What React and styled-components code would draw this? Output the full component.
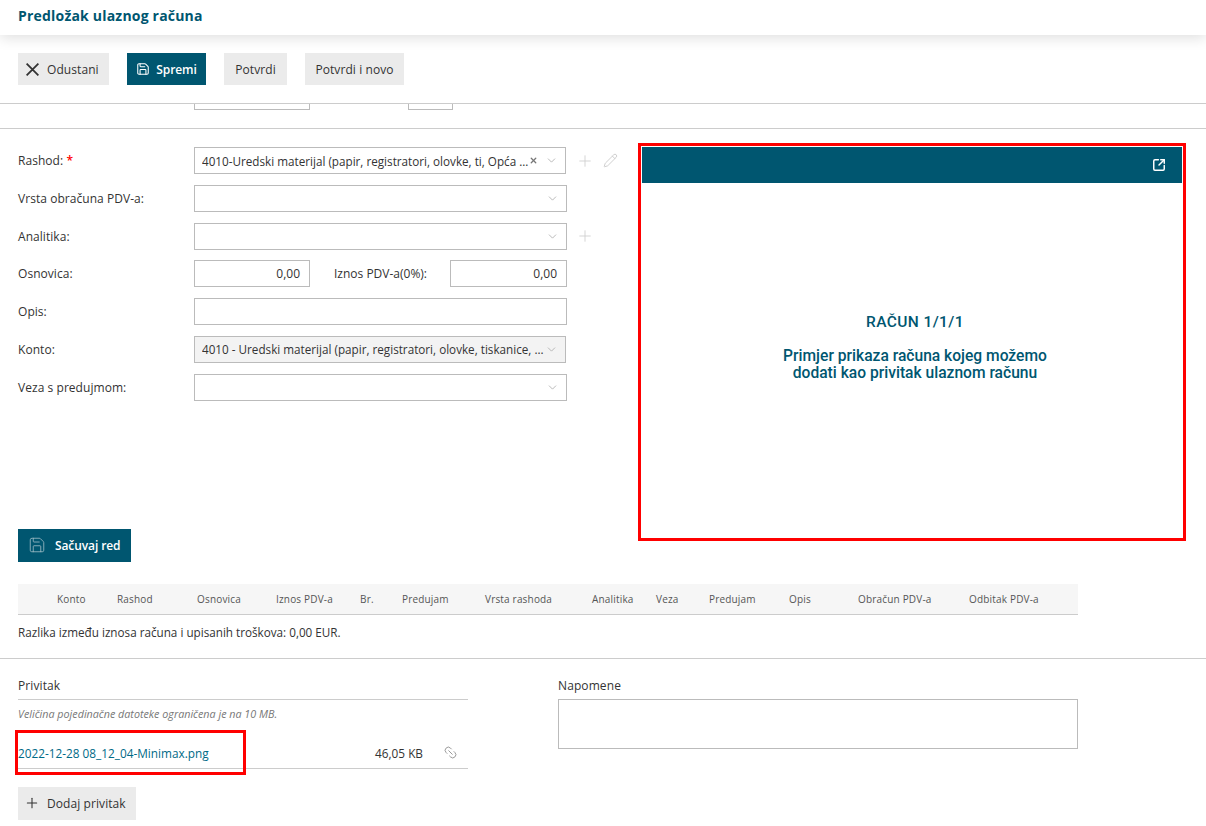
import React from "react";
import styled, { createGlobalStyle } from "styled-components";
import { X, Save, Plus, Pencil, ChevronDown, SquareArrowOutUpRight, Link2 } from "lucide-react";

const Global = createGlobalStyle`
  html, body {
    margin: 0;
    padding: 0;
    background: #fff;
    overflow: hidden;
  }
  body {
    font-family: "Open Sans", "Liberation Sans", sans-serif;
    font-size: 12px;
    color: #333;
  }
  * {
    box-sizing: border-box;
  }
`;

const Page = styled.div`
  width: 1206px;
  height: 826px;
  overflow: hidden;
`;

const Header = styled.header`
  position: relative;
  height: 35px;
  padding: 6px 18px 0;
  background: #fff;
  box-shadow: 0 3px 14px rgba(0, 0, 0, 0.13);
`;

const Title = styled.h1`
  margin: 0;
  font-size: 14px;
  line-height: 19px;
  font-weight: 700;
  letter-spacing: 0.2px;
  color: #005670;
`;

const Toolbar = styled.div`
  display: flex;
  gap: 18px;
  height: 69px;
  padding: 18px 18px 0;
  border-bottom: 1px solid #ccc;
`;

const Button = styled.button`
  display: flex;
  align-items: center;
  justify-content: ${(p) => (p.$left ? "flex-start" : "center")};
  gap: ${(p) => p.$gap || 6}px;
  width: ${(p) => p.$w}px;
  height: ${(p) => p.$h || 32}px;
  padding: 0 0 0 ${(p) => p.$left || 0}px;
  border: 0;
  font-family: inherit;
  font-size: 12px;
  font-weight: ${(p) => (p.$primary ? 600 : 400)};
  letter-spacing: ${(p) => (p.$primary ? -0.1 : 0.08)}px;
  color: ${(p) => (p.$primary ? "#fff" : "#333")};
  background: ${(p) => (p.$primary ? "#005670" : "#ebebeb")};
`;

const CloseIcon = styled.svg`
  flex: none;
  fill: none;
  stroke: #333;
  stroke-width: 1.8;
`;

const ClippedStrip = styled.div`
  display: flex;
  gap: 98px;
  height: 25px;
  padding-left: 194px;
  border-bottom: 1px solid #ccc;
`;

const ClippedInput = styled.div`
  width: ${(p) => p.$w}px;
  height: 6px;
  border: 1px solid #bbb;
  border-top: 0;
`;

const FormSection = styled.section`
  display: flex;
  padding-left: 18px;
`;

const LeftColumn = styled.div`
  width: 620px;
  padding-top: 18px;
`;

const Rows = styled.div`
  display: flex;
  flex-direction: column;
  gap: 10.75px;
`;

const Row = styled.div`
  display: flex;
  align-items: center;
  height: 27px;
`;

const Label = styled.label`
  flex: none;
  width: 176px;
  letter-spacing: 0.05px;
`;

const Required = styled.span`
  font-weight: 600;
  color: #f00;
`;

const Select = styled.div`
  display: flex;
  align-items: center;
  flex: none;
  width: ${(p) => p.$w || 373}px;
  height: 27px;
  padding: 0 7px;
  border: 1px solid #bbb;
  font-size: 11.7px;
  background: ${(p) => (p.$disabled ? "#f3f3f3" : "#fff")};
`;

const SelectValue = styled.span`
  flex: 1;
  min-width: 0;
  white-space: nowrap;
  overflow: hidden;
`;

const Clear = styled(X)`
  flex: none;
  margin-right: 7px;
  color: #777;
`;

const Chevron = styled(ChevronDown)`
  flex: none;
  margin-left: auto;
  color: #aaa;
`;

const Actions = styled.div`
  display: flex;
  align-items: center;
  gap: 9px;
  margin-left: ${(p) => p.$ml}px;
  color: #ccc;
`;

const NumberInput = styled.div`
  flex: none;
  width: ${(p) => p.$w}px;
  height: 27px;
  padding-right: 9px;
  border: 1px solid #bbb;
  line-height: 25px;
  text-align: right;
`;

const InlineLabel = styled.span`
  flex: none;
  width: 140px;
  padding-left: 24px;
  white-space: nowrap;
`;

const TextInput = styled.div`
  width: 373px;
  height: 27px;
  border: 1px solid #bbb;
`;

const SaveRow = styled.div`
  margin-top: 128px;
`;

const Preview = styled.aside`
  width: 548px;
  height: 398px;
  margin-top: 14px;
  padding: 1px;
  border: 3px solid #f00;
  background: #fff;
`;

const PreviewBar = styled.div`
  display: flex;
  align-items: center;
  justify-content: flex-end;
  width: 540px;
  height: 36px;
  padding-right: 16px;
  color: #fff;
  background: #005670;
`;

const PreviewBody = styled.div`
  padding: 129px 0 0 6px;
  font-family: Roboto, "Liberation Sans", sans-serif;
  text-align: center;
  color: #005670;
`;

const PreviewTitle = styled.div`
  font-size: 15.5px;
  line-height: 20px;
  font-weight: 500;
  letter-spacing: 0.4px;
`;

const PreviewText = styled.div`
  margin-top: 16px;
  font-size: 15.6px;
  line-height: 17px;
  font-weight: 500;
`;

const TableHead = styled.div`
  display: grid;
  grid-template-columns: 60px 80px 79px 84px 42px 83px 107px 64px 53px 80px 69px 111px auto;
  align-items: center;
  width: 1060px;
  height: 31px;
  margin: 22px 0 0 18px;
  padding-left: 39px;
  font-size: 10px;
  letter-spacing: 0.18px;
  color: #555;
  background: #f6f6f6;
  border-bottom: 1px solid #ccc;
`;

const Difference = styled.div`
  height: 44px;
  padding: 9px 0 0 18px;
  font-size: 11.7px;
  line-height: 17px;
  border-bottom: 1px solid #ccc;
`;

const Bottom = styled.section`
  display: flex;
  gap: 90px;
  padding: 18px 18px 0;
`;

const Attachments = styled.div`
  width: 450px;
`;

const Notes = styled.div`
  width: 520px;
`;

const SectionLabel = styled.div`
  height: 22px;
  line-height: 18px;
  color: #333;
  letter-spacing: 0.1px;
`;

const AttachmentsLabel = styled(SectionLabel)`
  height: 23px;
  border-bottom: 1px solid #ccc;
`;

const Hint = styled.div`
  margin-top: 7px;
  font-size: 10.75px;
  line-height: 14px;
  font-style: italic;
  color: #777;
`;

const FileRow = styled.div`
  position: relative;
  display: flex;
  align-items: center;
  height: 41px;
  margin-top: 7px;
  padding-top: 10px;
  font-size: 11.8px;
  border-bottom: 1px solid #ccc;
`;

const FileLink = styled.a`
  flex: 1;
  color: #006a87;
`;

const FileSize = styled.span`
  margin-right: 20px;
`;

const FileIcon = styled(Link2)`
  margin-right: 10px;
  color: #999;
  transform: rotate(45deg);
`;

const Highlight = styled.div`
  position: absolute;
  left: -3px;
  top: 2px;
  width: 231px;
  height: 45px;
  border: 3px solid #f00;
  pointer-events: none;
`;

const AddRow = styled.div`
  margin-top: 18px;
`;

const NotesBox = styled.div`
  height: 50px;
  border: 1px solid #bbb;
`;

const columns = [
  "Konto", "Rashod", "Osnovica", "Iznos PDV-a", "Br.", "Predujam", "Vrsta rashoda",
  "Analitika", "Veza", "Predujam", "Opis", "Obračun PDV-a", "Odbitak PDV-a",
];

function App() {
  return (
    <Page>
      <Global />
      <Header>
        <Title>Predložak ulaznog računa</Title>
      </Header>
      <Toolbar>
        <Button $w={91} $left={8} $gap={8}>
          <CloseIcon width="13" height="13" viewBox="0 0 13 13">
            <path d="M0.6 0.6L12.4 12.4M12.4 0.6L0.6 12.4" />
          </CloseIcon>
          Odustani
        </Button>
        <Button $w={79} $primary $gap={6}>
          <Save size={14} strokeWidth={1.8} />
          Spremi
        </Button>
        <Button $w={63}>Potvrdi</Button>
        <Button $w={99}>Potvrdi i novo</Button>
      </Toolbar>
      <ClippedStrip>
        <ClippedInput $w={116} />
        <ClippedInput $w={45} />
      </ClippedStrip>
      <FormSection>
        <LeftColumn>
          <Rows>
            <Row>
              <Label>
                Rashod: <Required>*</Required>
              </Label>
              <Select $w={372}>
                <SelectValue>4010-Uredski materijal (papir, registratori, olovke, ti, Opća ...</SelectValue>
                <Clear size={9} strokeWidth={3.5} />
                <Chevron size={13} strokeWidth={1.5} />
              </Select>
              <Actions $ml={10}>
                <Plus size={18} strokeWidth={1.1} />
                <Pencil size={15} strokeWidth={1.5} />
              </Actions>
            </Row>
            <Row>
              <Label>Vrsta obračuna PDV-a:</Label>
              <Select>
                <Chevron size={13} strokeWidth={1.5} />
              </Select>
            </Row>
            <Row>
              <Label>Analitika:</Label>
              <Select>
                <Chevron size={13} strokeWidth={1.5} />
              </Select>
              <Actions $ml={9}>
                <Plus size={18} strokeWidth={1.1} />
              </Actions>
            </Row>
            <Row>
              <Label>Osnovica:</Label>
              <NumberInput $w={116}>0,00</NumberInput>
              <InlineLabel>Iznos PDV-a(0%):</InlineLabel>
              <NumberInput $w={117}>0,00</NumberInput>
            </Row>
            <Row>
              <Label>Opis:</Label>
              <TextInput />
            </Row>
            <Row>
              <Label>Konto:</Label>
              <Select $w={372} $disabled>
                <SelectValue>4010 - Uredski materijal (papir, registratori, olovke, tiskanice, ...</SelectValue>
                <Chevron size={13} strokeWidth={1.5} />
              </Select>
            </Row>
            <Row>
              <Label>Veza s predujmom:</Label>
              <Select>
                <Chevron size={13} strokeWidth={1.5} />
              </Select>
            </Row>
          </Rows>
          <SaveRow>
            <Button $w={113} $h={33} $primary $gap={9} $left={10}>
              <Save size={18} strokeWidth={1.1} color="#9fbcc6" />
              Sačuvaj red
            </Button>
          </SaveRow>
        </LeftColumn>
        <Preview>
          <PreviewBar>
            <SquareArrowOutUpRight size={14} strokeWidth={2.5} />
          </PreviewBar>
          <PreviewBody>
            <PreviewTitle>RAČUN 1/1/1</PreviewTitle>
            <PreviewText>
              Primjer prikaza računa kojeg možemo
              <br />
              dodati kao privitak ulaznom računu
            </PreviewText>
          </PreviewBody>
        </Preview>
      </FormSection>
      <TableHead>
        {columns.map((c, i) => (
          <span key={i}>{c}</span>
        ))}
      </TableHead>
      <Difference>Razlika između iznosa računa i upisanih troškova: 0,00 EUR.</Difference>
      <Bottom>
        <Attachments>
          <AttachmentsLabel>Privitak</AttachmentsLabel>
          <Hint>Veličina pojedinačne datoteke ograničena je na 10 MB.</Hint>
          <FileRow>
            <FileLink>2022-12-28 08_12_04-Minimax.png</FileLink>
            <FileSize>46,05 KB</FileSize>
            <FileIcon size={15} strokeWidth={1.5} />
            <Highlight />
          </FileRow>
          <AddRow>
            <Button $w={118} $h={33} $left={6} $gap={7}>
              <Plus size={16} strokeWidth={1.6} />
              Dodaj privitak
            </Button>
          </AddRow>
        </Attachments>
        <Notes>
          <SectionLabel>Napomene</SectionLabel>
          <NotesBox />
        </Notes>
      </Bottom>
    </Page>
  );
}

export default App;
